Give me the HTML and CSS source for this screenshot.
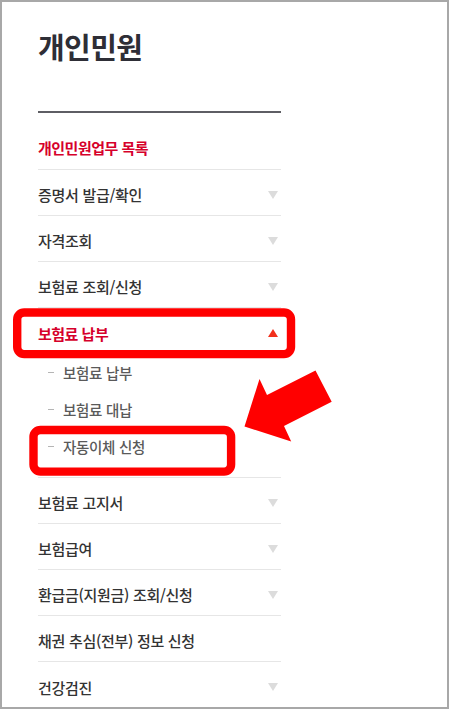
FILE: index.html
```html
<!DOCTYPE html>
<html lang="ko">
<head>
<meta charset="utf-8">
<title>개인민원</title>
<link rel="stylesheet" href="styles.css">
</head>
<body>
<div class="frame">
  <nav class="panel">
    <h1 class="title">개인민원</h1>
    <div class="head">개인민원업무 목록</div>
    <ul class="menu">
      <li class="item"><span>증명서 발급/확인</span><i class="tri"></i></li>
      <li class="item"><span>자격조회</span><i class="tri"></i></li>
      <li class="item"><span>보험료 조회/신청</span><i class="tri"></i></li>
      <li class="item active"><span>보험료 납부</span><i class="tri up"></i></li>
      <li class="sub">
        <ul class="sublist">
          <li class="subitem"><i class="dash"></i><span>보험료 납부</span></li>
          <li class="subitem"><i class="dash"></i><span>보험료 대납</span></li>
          <li class="subitem"><i class="dash"></i><span>자동이체 신청</span></li>
        </ul>
      </li>
      <li class="item"><span>보험료 고지서</span><i class="tri"></i></li>
      <li class="item"><span>보험급여</span><i class="tri"></i></li>
      <li class="item"><span>환급금(지원금) 조회/신청</span><i class="tri"></i></li>
      <li class="item"><span>채권 추심(전부) 정보 신청</span></li>
      <li class="item last"><span>건강검진</span><i class="tri"></i></li>
    </ul>
  </nav>
  <svg class="marks" width="449" height="709" viewBox="0 0 449 709">
    <rect x="17.2" y="312.5" width="273.8" height="41.6" rx="7" ry="7" fill="none" stroke="#ff0000" stroke-width="8.4"/>
    <rect x="33.5" y="430" width="197.6" height="41.6" rx="7" ry="7" fill="none" stroke="#ff0000" stroke-width="8.4"/>
    <polygon points="244.5,426.5 259.5,379 267,395 315.5,370.5 331.7,401.8 284,426 291.2,441.5" fill="#ff0000"/>
  </svg>
</div>
</body>
</html>
```
FILE: styles.css
```css
* { box-sizing: border-box; }
html, body { margin: 0; padding: 0; background: #fff; }
body {
  font-family: "Noto Sans CJK KR", "Noto Sans", sans-serif;
  color: #3a3a3a;
}
.frame {
  position: relative;
  width: 449px;
  height: 709px;
  border: 2px solid #a8a8a8;
  overflow: hidden;
}
.panel {
  width: 279px;
  padding-left: 36px;
}
.title {
  margin: 0;
  padding-top: 28px;
  padding-bottom: 49px;
  font-size: 29px;
  line-height: 32px;
  font-weight: 700;
  letter-spacing: -0.6px;
  color: #2e2e36;
  border-bottom: 2px solid #5e5e64;
}
.head {
  height: 57px;
  padding-top: 25px;
  font-size: 15px;
  line-height: 20px;
  font-weight: 700;
  letter-spacing: -0.5px;
  color: #d6002b;
  border-bottom: 1px solid #e6e6e6;
}
.menu, .sublist { list-style: none; margin: 0; padding: 0; }
.item {
  display: flex;
  align-items: center;
  justify-content: space-between;
  height: 46px;
  padding: 4px 3px 0 0;
  border-bottom: 1px solid #e6e6e6;
  font-size: 15px;
  font-weight: 500;
  letter-spacing: -0.3px;
  color: #333;
}
.item.last { border-bottom: 0; }
.item.active { color: #d6002b; border-bottom: 0; font-weight: 700; letter-spacing: -0.5px; }
.tri {
  width: 0; height: 0;
  border-left: 5px solid transparent;
  border-right: 5px solid transparent;
  border-top: 8px solid #dcdcdc;
}
.tri.up {
  border-top: 0;
  border-bottom: 8px solid #f2301c;
}
.sub {
  padding-bottom: 12px;
  border-bottom: 1px solid #e6e6e6;
}
.subitem {
  display: flex;
  align-items: center;
  height: 37px;
  padding-left: 10px;
  font-size: 14.5px;
  font-weight: 500;
  letter-spacing: -0.3px;
  color: #5a5a5a;
}
.dash {
  width: 6px;
  height: 1px;
  background: #b5b5b5;
  margin-right: 9px;
}
.marks {
  position: absolute;
  left: -2px;
  top: -2px;
  pointer-events: none;
}
```
